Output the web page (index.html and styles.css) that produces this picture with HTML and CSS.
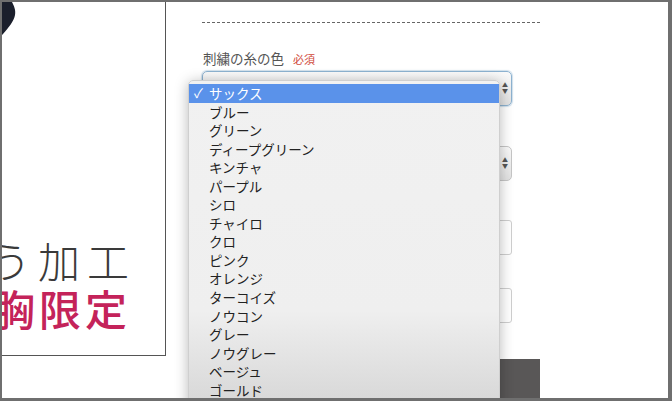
FILE: index.html
```html
<!DOCTYPE html>
<html lang="ja">
<head>
    <meta charset="UTF-8">
    <meta name="viewport" content="width=device-width, initial-scale=1.0">
    <title>刺繍オプション</title>
    <link rel="stylesheet" href="styles.css">
</head>
<body>
    <div class="frame">
        <div class="photo">
            <svg class="blob" width="20" height="40" viewBox="0 0 20 40">
                <path d="M0 0 L10 0 C12 4 14 8 13 13 C12 19 7 25 1 32 L0 33 Z" fill="#1b1f2c"/>
            </svg>
            <div class="catch">
                <div class="catch-line">う加工</div>
                <div class="catch-line red">胸限定</div>
            </div>
        </div>

        <div class="form">
            <div class="sep"></div>

            <div class="field">
                <div class="label">刺繍の糸の色 <span class="req">必須</span></div>
                <div class="select focus"><span class="arrows">&#9650;<br>&#9660;</span></div>
            </div>

            <div class="field gap1">
                <div class="select"><span class="arrows">&#9650;<br>&#9660;</span></div>
            </div>

            <div class="field gap2">
                <input type="text" class="text">
            </div>

            <div class="field gap3">
                <input type="text" class="text">
            </div>

            <div class="submit"></div>
        </div>

        <!-- 開いているセレクトのリスト -->
        <ul class="dropdown">
            <li class="on"><span class="check">✓</span>サックス</li>
            <li>ブルー</li>
            <li>グリーン</li>
            <li>ディープグリーン</li>
            <li>キンチャ</li>
            <li>パープル</li>
            <li>シロ</li>
            <li>チャイロ</li>
            <li>クロ</li>
            <li>ピンク</li>
            <li>オレンジ</li>
            <li>ターコイズ</li>
            <li>ノウコン</li>
            <li>グレー</li>
            <li>ノウグレー</li>
            <li>ベージュ</li>
            <li>ゴールド</li>
        </ul>
    </div>
</body>
</html>
```

FILE: styles.css
```css
body {
    margin: 0;
    font-family: "Noto Sans CJK JP", "Noto Sans", sans-serif;
    background: #fff;
}
.frame {
    width: 672px;
    height: 401px;
    box-sizing: border-box;
    border: 2px solid #6f6f6f;
    border-right-width: 4px;
    border-bottom-width: 3px;
    display: flex;
    align-items: flex-start;
    position: relative;
    overflow: hidden;
    background: #fff;
}
.photo {
    width: 163px;
    height: 353px;
    flex-shrink: 0;
    border-right: 1px solid #555;
    border-bottom: 1px solid #555;
    position: relative;
    overflow: hidden;
}
.blob {
    position: absolute;
    left: 0;
    top: 0;
}
.catch {
    padding-top: 234px;
}
.catch-line {
    font-size: 42px;
    line-height: 48px;
    font-weight: 300;
    color: #3a3a3a;
    letter-spacing: 7px;
    margin-left: -13px;
    white-space: nowrap;
}
.catch-line.red {
    font-weight: 500;
    color: #c4235a;
    letter-spacing: 4px;
    margin-left: -9px;
}
.form {
    width: 338px;
    margin-left: 36px;
}
.sep {
    margin-top: 20px;
    border-top: 1px dashed #666;
}
.field {
    width: 310px;
}
.label {
    margin-top: 25px;
    height: 23px;
    line-height: 20px;
    font-size: 13.5px;
    color: #555;
    padding-left: 1px;
}
.req {
    font-size: 11px;
    color: #d0493a;
    margin-left: 6px;
}
.select {
    height: 33px;
    border: 1px solid #c6c6c6;
    border-radius: 5px;
    background: linear-gradient(#fafafa, #e2e2e2);
    position: relative;
}
.select.focus {
    border-color: #8db2d0;
    box-shadow: 0 0 1px 1px rgba(141, 178, 208, 0.4);
}
.arrows {
    position: absolute;
    right: 3px;
    top: 10px;
    font-size: 6px;
    line-height: 6px;
    color: #555;
}
.gap1 {
    margin-top: 40px;
}
.gap2 {
    margin-top: 39px;
}
.gap3 {
    margin-top: 33px;
}
.text {
    display: block;
    width: 100%;
    height: 35px;
    box-sizing: border-box;
    border: 1px solid #cfcfcf;
    border-radius: 3px;
    background: #fff;
}
.submit {
    margin-top: 36px;
    height: 40px;
    background: #595757;
}
.dropdown {
    position: absolute;
    left: 186px;
    top: 78px;
    width: 312px;
    height: 330px;
    margin: 0;
    padding: 3px 0 0;
    list-style: none;
    box-sizing: border-box;
    border-radius: 5px 5px 0 0;
    background: linear-gradient(#f1f1f1 0%, #efefef 70%, #d6d6d6 100%);
    box-shadow: 0 2px 14px rgba(0, 0, 0, 0.28);
    border: 1px solid #cfcfcf;
}
.dropdown li {
    height: 18.56px;
    line-height: 18.56px;
    font-size: 13.5px;
    color: #222;
    padding-left: 20px;
    white-space: nowrap;
}
.dropdown li.on {
    background: #5a92ea;
    color: #fff;
    position: relative;
}
.check {
    position: absolute;
    left: 5px;
    font-size: 13px;
}
```
